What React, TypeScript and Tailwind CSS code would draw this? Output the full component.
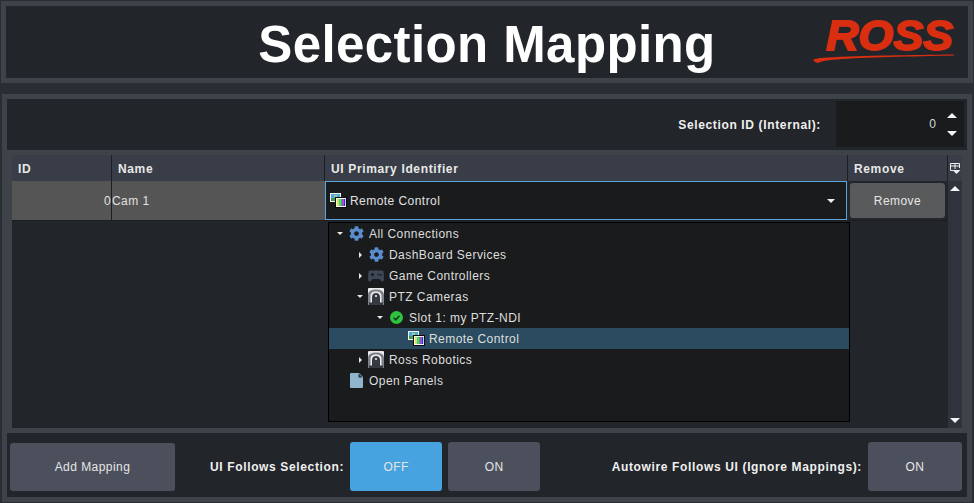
import React from "react";
import { FaCog } from "react-icons/fa";

const font = "font-['Liberation_Sans',Arial,sans-serif]";

function Tri({ dir }: { dir: "up" | "down" }) {
  const pts = dir === "up" ? "0,5 5,0 10,5" : "0,0 10,0 5,5";
  return (
    <svg width={10} height={5} viewBox="0 0 10 5">
      <polygon points={pts} fill="#f4f4f4" />
    </svg>
  );
}

function SmallTri({ open }: { open: boolean }) {
  return open ? (
    <svg width={6} height={3} viewBox="0 0 6 3"><polygon points="0,0 6,0 3,3" fill="#e8e8e8" /></svg>
  ) : (
    <svg width={3} height={6} viewBox="0 0 3 6"><polygon points="0,0 3,3 0,6" fill="#e8e8e8" /></svg>
  );
}

function RemoteIcon() {
  return (
    <svg width={17} height={15} viewBox="0 0 17 15">
      <rect x="0" y="0" width="11" height="9" fill="#f2f2f2" />
      <rect x="1" y="1" width="9" height="4" fill="#4fa6dc" />
      <rect x="1" y="5" width="9" height="3" fill="#3f9a55" />
      <rect x="4" y="2" width="3" height="2" fill="#9fd08a" />
      <rect x="5.5" y="4.5" width="11" height="10" fill="#f7f7f7" stroke="#0b0b0b" />
      <rect x="7" y="6" width="2" height="7" fill="#f0e020" />
      <rect x="9" y="6" width="1.5" height="7" fill="#20d0d8" />
      <rect x="10.5" y="6" width="1.5" height="7" fill="#30c040" />
      <rect x="12" y="6" width="1.5" height="7" fill="#d830c8" />
      <rect x="13.5" y="6" width="1.7" height="7" fill="#2038d8" />
    </svg>
  );
}

function PtzIcon() {
  return (
    <svg width={16} height={17} viewBox="0 0 16 17">
      <rect width="16" height="17" rx="1" fill="#ececec" />
      <path d="M0 17V7C0 3 3.5 1.5 8 1.5S16 3 16 7V17H13.5V8C13.5 5 11 3.6 8 3.6S2.5 5 2.5 8V17Z" fill="#7d8288" />
      <path d="M4 17V9C4 6.5 5.7 5 8 5S12 6.5 12 9V17Z" fill="#353a42" />
      <circle cx="8" cy="8" r="1.1" fill="#ececec" />
      <rect x="1" y="14.5" width="14" height="2.5" fill="#353a42" />
    </svg>
  );
}

function GameIcon() {
  return (
    <svg width={16} height={12} viewBox="0 0 16 12">
      <path d="M2 0.5H14Q15.5 0.5 15.7 2.5L16 9.5Q16 11.5 14.5 11.5Q13 11.5 11.5 9H4.5Q3 11.5 1.5 11.5Q0 11.5 0 9.5L0.3 2.5Q0.5 0.5 2 0.5Z" fill="#3d4756" />
      <rect x="3" y="4" width="3" height="1.4" fill="#1a1b1d" />
      <rect x="3.8" y="3.2" width="1.4" height="3" fill="#1a1b1d" />
      <circle cx="10.5" cy="4.7" r="0.9" fill="#1a1b1d" />
      <circle cx="12.8" cy="4.7" r="0.9" fill="#1a1b1d" />
    </svg>
  );
}

function CheckIcon() {
  return (
    <svg width={13} height={13} viewBox="0 0 13 13">
      <circle cx="6.5" cy="6.5" r="6.5" fill="#2ec23e" />
      <path d="M3.6 6.8 5.7 8.9 9.5 4.7" fill="none" stroke="#123a18" strokeWidth="1.6" />
    </svg>
  );
}

function FileIcon() {
  return (
    <svg width={13} height={15} viewBox="0 0 13 15">
      <path d="M0 1a1 1 0 0 1 1-1H9L13 4V14a1 1 0 0 1-1 1H1a1 1 0 0 1-1-1Z" fill="#8fb6cc" />
      <path d="M8.5 0.5 12.6 4.6H8.5Z" fill="#27343c" />
    </svg>
  );
}

function TreeRow({ indent, arrow, icon, label, selected }: { indent: number; arrow?: "open" | "closed"; icon: React.ReactNode; label: string; selected?: boolean }) {
  return (
    <div className={`flex h-[21px] items-center ${selected ? "bg-[#2b4c60]" : ""}`} style={{ paddingLeft: indent }}>
      <span className="flex w-[12px] shrink-0 items-center justify-center">
        {arrow ? <SmallTri open={arrow === "open"} /> : null}
      </span>
      <span className="flex w-[20px] shrink-0 items-center justify-center">{icon}</span>
      <span className="ml-[3px] whitespace-nowrap">{label}</span>
    </div>
  );
}

function Logo() {
  return (
    <svg width={146} height={56} viewBox="0 0 146 56" className="mr-[9px] mt-[-6px]">
      <text x="13" y="39" fontFamily="Liberation Sans, Arial, sans-serif" fontWeight="700" fontStyle="italic" fontSize="43" textLength="127" lengthAdjust="spacingAndGlyphs" fill="#d92f10" stroke="#d92f10" strokeWidth="1.8">ROSS</text>
      <path d="M0 49C2 47.5 6 47 14 46.5C50 44.5 100 44 141 43.5V44.6C100 45.5 50 46.6 24 48.4C14 49 8 50 5 52C3 51.5 1 50.5 0 49Z" fill="#d92f10" />
    </svg>
  );
}

const btn = "flex items-center justify-center rounded-[3px] text-[12px] tracking-[0.45px] text-[#e6e6e6]";
const label = "whitespace-nowrap text-[12px] font-bold tracking-[0.64px] text-[#f0f0f0]";
const head = "flex h-full items-center pl-[6px] pt-[1px] text-[12px] font-bold tracking-[0.64px] text-[#e8e8e8]";

export default function App() {
  return (
    <div className={`flex h-[503px] w-[974px] flex-col overflow-hidden bg-[#2a2e34] ${font}`}>
      <div className="mx-[1px] mt-[1px] grid h-[82px] shrink-0 grid-cols-[1fr_auto_1fr] items-center border-[5px] border-[#3e434a] bg-[#22252a]">
        <div />
        <div className="mt-[4px] text-[51px] font-bold leading-none tracking-[0.4px] text-white">Selection Mapping</div>
        <div className="flex justify-end"><Logo /></div>
      </div>

      <div className="mx-[2px] mt-[11px] flex h-[408px] shrink-0 flex-col border-[5px] border-[#3e434a] bg-[#22252a]">
        <div className="flex h-[51px] shrink-0 items-start justify-end pr-[3px] pt-[2px]">
          <span className={`${label} mr-[15px] mt-[15px] tracking-[0.55px]`}>Selection ID (Internal):</span>
          <div className="flex h-[46px] w-[128px] items-center justify-end bg-[#1a1b1d] text-[12px] text-[#d8d8d8]">
            <span className="mr-[11px]">0</span>
            <div className="mr-[7px] flex flex-col gap-[13px]">
              <Tri dir="up" />
              <Tri dir="down" />
            </div>
          </div>
        </div>

        <div className="relative flex h-[283px] shrink-0 flex-col border-[5px] border-[#3e434a]">
          <div className="flex h-[26px] shrink-0 bg-[#383d47]">
            <div className={`${head} w-[100px] border-r border-[#1c1e22]`}>ID</div>
            <div className={`${head} w-[213px] border-r border-[#1c1e22]`}>Name</div>
            <div className={`${head} w-[523px] border-r border-[#1c1e22]`}>UI Primary Identifier</div>
            <div className={`${head} w-[100px] border-r border-[#1c1e22]`}>Remove</div>
            <div className="flex w-[14px] items-center justify-center">
              <svg width={12} height={13} viewBox="0 0 12 13">
                <path d="M1.5 1.5H10.5V6M1.5 1.5V8.5H4M1.5 4H10.5M6 1.5V7" fill="none" stroke="#eee" strokeWidth="1" />
                <polygon points="3.5,8 11.5,8 7.5,12" fill="#eee" />
              </svg>
            </div>
          </div>
          <div className="flex min-h-0 flex-1">
            <div className="flex-1">
              <div className="flex h-[40px] border-b border-[#1c1e22] text-[12px] tracking-[0.45px] text-[#e0e0e0]">
                <div className="flex w-[100px] items-center justify-end border-r border-[#1c1e22] bg-[#555555]">0</div>
                <div className="flex w-[213px] items-center bg-[#555555]">Cam 1</div>
                <div className="flex w-[522px] items-center border border-[#5aa5dc] bg-[#1a1b1d] pl-[4px]">
                  <RemoteIcon />
                  <span className="ml-[3px]">Remote Control</span>
                  <div className="ml-auto mr-[11px]"><svg width={8} height={4} viewBox="0 0 8 4"><polygon points="0,0 8,0 4,4" fill="#eee" /></svg></div>
                </div>
                <div className="flex flex-1 items-center justify-center">
                  <div className={`${btn} h-[35px] w-[95px] bg-[#595a5b]`}>Remove</div>
                </div>
              </div>
            </div>
            <div className="flex w-[14px] flex-col items-center justify-between bg-[#2f333b] pb-[5px] pt-[5px]">
              <Tri dir="up" />
              <Tri dir="down" />
            </div>
          </div>

          <div className="absolute left-[316px] top-[67px] h-[200px] w-[522px] border border-black bg-[#1a1b1d] text-[12px] tracking-[0.45px] text-[#dedede]">
            <TreeRow indent={5} arrow="open" icon={<FaCog size={15} color="#5a8ccb" />} label="All Connections" />
            <TreeRow indent={25} arrow="closed" icon={<FaCog size={15} color="#5a8ccb" />} label="DashBoard Services" />
            <TreeRow indent={25} arrow="closed" icon={<GameIcon />} label="Game Controllers" />
            <TreeRow indent={25} arrow="open" icon={<PtzIcon />} label="PTZ Cameras" />
            <TreeRow indent={45} arrow="open" icon={<CheckIcon />} label="Slot 1: my PTZ-NDI" />
            <TreeRow indent={65} icon={<RemoteIcon />} label="Remote Control" selected />
            <TreeRow indent={25} arrow="closed" icon={<PtzIcon />} label="Ross Robotics" />
            <TreeRow indent={5} icon={<FileIcon />} label="Open Panels" />
          </div>
        </div>

        <div className="flex flex-1 items-center pl-[3px] pr-[5px] pt-[3px]">
          <div className={`${btn} h-[48px] w-[165px] bg-[#4b505c]`}>Add Mapping</div>
          <span className={`${label} ml-[35px]`}>UI Follows Selection:</span>
          <div className={`${btn} ml-[6px] h-[49px] w-[92px] bg-[#46a3e0]`}>OFF</div>
          <div className={`${btn} ml-[6px] h-[49px] w-[92px] bg-[#4b505c]`}>ON</div>
          <span className={`${label} ml-auto tracking-[0.61px]`}>Autowire Follows UI (Ignore Mappings):</span>
          <div className={`${btn} ml-[6px] h-[49px] w-[94px] bg-[#4b505c]`}>ON</div>
        </div>
      </div>
    </div>
  );
}
